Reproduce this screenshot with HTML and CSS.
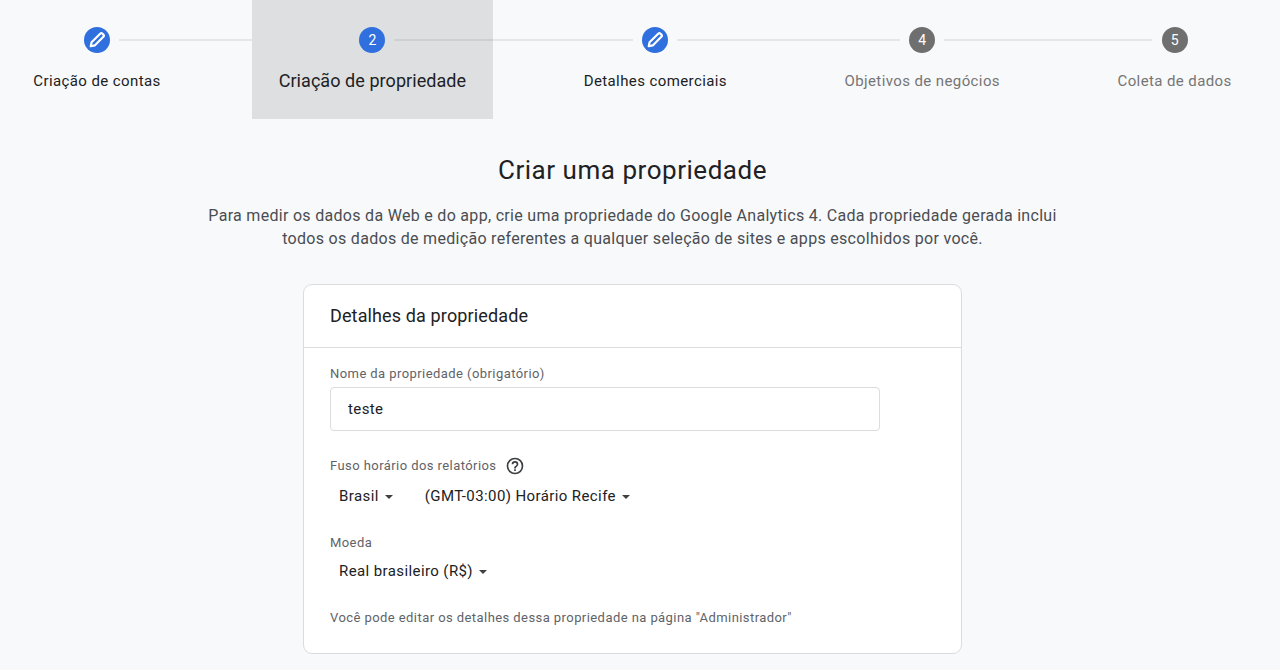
FILE: index.html
```html
<!DOCTYPE html>
<html lang="pt-BR">
<head>
  <meta charset="UTF-8" />
  <meta name="viewport" content="width=device-width, initial-scale=1.0"/>
  <title>Criar uma propriedade</title>
  <link rel="stylesheet" href="styles.css">
</head>
<body>

  <div class="page">
    <div class="stepper">
      <div class="step done line-1">
        <span class="dot">
          <svg viewBox="0 0 24 24" width="20" height="20"><path d="M4.5 19.5l1-4.8L15.8 4.4a2 2 0 0 1 2.8 0l1 1a2 2 0 0 1 0 2.8L9.300 18.500z"/></svg>
        </span>
        <span class="step-label">Criação de contas</span>
      </div>
      <div class="step current line-2">
        <span class="dot">2</span>
        <span class="step-label">Criação de propriedade</span>
      </div>
      <div class="step done line-3">
        <span class="dot">
          <svg viewBox="0 0 24 24" width="20" height="20"><path d="M4.5 19.5l1-4.8L15.8 4.4a2 2 0 0 1 2.8 0l1 1a2 2 0 0 1 0 2.8L9.300 18.500z"/></svg>
        </span>
        <span class="step-label">Detalhes comerciais</span>
      </div>
      <div class="step line-4">
        <span class="dot">4</span>
        <span class="step-label">Objetivos de negócios</span>
      </div>
      <div class="step">
        <span class="dot">5</span>
        <span class="step-label">Coleta de dados</span>
      </div>
    </div>

    <div class="intro">
      <h1>Criar uma propriedade</h1>
      <p>Para medir os dados da Web e do app, crie uma propriedade do Google Analytics 4. Cada propriedade gerada inclui<br/>todos os dados de medição referentes a qualquer seleção de sites e apps escolhidos por você.</p>
    </div>

    <div class="card">
      <div class="card-title">Detalhes da propriedade</div>
      <div class="card-body">
        <label class="field-label" for="propertyName">Nome da propriedade (obrigatório)</label>
        <input class="text-input" type="text" id="propertyName" value="teste" />

        <div class="field-label help-row">
          Fuso horário dos relatórios
          <svg viewBox="0 0 24 24" width="20" height="20"><path d="M11 18h2v-2h-2v2zm1-16a10 10 0 1 0 0 20 10 10 0 0 0 0-20zm0 18a8 8 0 1 1 0-16 8 8 0 0 1 0 16zm0-14a4 4 0 0 0-4 4h2a2 2 0 1 1 4 0c0 2-3 1.75-3 5h2c0-2.25 3-2.5 3-5a4 4 0 0 0-4-4z"/></svg>
        </div>
        <div class="select-row">
          <span class="select country">Brasil</span>
          <span class="select">(GMT-03:00) Horário Recife</span>
        </div>

        <div class="field-label currency-label">Moeda</div>
        <div class="select-row currency-row">
          <span class="select">Real brasileiro (R$)</span>
        </div>

        <p class="note">Você pode editar os detalhes dessa propriedade na página "Administrador"</p>
      </div>
    </div>
  </div>

</body>
</html>
```

FILE: styles.css
```css
html, body {
  height: 100%;
}
body {
  margin: 0;
  overflow: hidden;
  background: #f8f9fb;
  font-family: Roboto, 'Liberation Sans', sans-serif;
  color: #202124;
}
.page {
  width: 1265px;
}
.stepper {
  display: flex;
  justify-content: center;
  gap: 65.5px;
}
.step {
  position: relative;
  display: flex;
  flex-direction: column;
  align-items: center;
  height: 119px;
  padding: 0 26px;
  box-sizing: border-box;
  color: #757575;
}
.step.done, .step.current {
  color: #202124;
}
.step.current {
  background: #dedfe1;
  padding: 0 26.5px;
  margin-right: -0.5px;
}
.step::after {
  position: absolute;
  top: 39px;
  left: calc(50% + 22px);
  height: 2px;
  background: rgba(60, 64, 67, 0.1);
}
.line-1::after { content: ""; width: 231px; }
.line-2::after { content: ""; width: 239px; }
.line-3::after { content: ""; width: 223px; }
.line-4::after { content: ""; width: 208px; }
.dot {
  display: flex;
  align-items: center;
  justify-content: center;
  width: 26px;
  height: 26px;
  margin-top: 27px;
  border-radius: 50%;
  background: #6f6f6f;
  color: white;
  font-size: 14px;
}
.done .dot, .current .dot {
  background: #2f6fde;
}
.dot svg {
  fill: none;
  stroke: white;
  stroke-width: 2.6;
  stroke-linejoin: round;
}
.step-label {
  margin-top: 19px;
  font-size: 15px;
  line-height: 18px;
  letter-spacing: 0.4px;
  white-space: nowrap;
}
.current .step-label {
  font-size: 18px;
  letter-spacing: 0.06px;
}
.intro {
  text-align: center;
  margin-top: 34px;
}
h1 {
  margin: 0;
  font-size: 26px;
  line-height: 34px;
  font-weight: 400;
  letter-spacing: 0.53px;
}
.intro p {
  margin: 17px 0 0;
  font-size: 16px;
  line-height: 23px;
  letter-spacing: 0.3px;
  color: #4a4d51;
}
.card {
  width: 659px;
  box-sizing: border-box;
  margin: 34px auto 0;
  background: white;
  border: 1px solid #dadce0;
  border-radius: 9px;
}
.card-title {
  padding: 0 26px;
  height: 62px;
  line-height: 62px;
  font-size: 18px;
  letter-spacing: 0.13px;
  border-bottom: 1px solid #dadce0;
}
.card-body {
  padding: 18px 26px 27px;
}
.field-label {
  display: block;
  font-size: 13px;
  line-height: 16px;
  letter-spacing: 0.43px;
  color: #5f6368;
}
.text-input {
  display: block;
  width: 550px;
  height: 44px;
  box-sizing: border-box;
  margin-top: 5px;
  padding: 0 17px;
  border: 1px solid #dadce0;
  border-radius: 4px;
  font-family: inherit;
  font-size: 15px;
  letter-spacing: 0.4px;
  color: #202124;
}
.help-row {
  display: flex;
  align-items: center;
  gap: 8px;
  margin-top: 25px;
}
.help-row svg {
  fill: #3c4043;
}
.select-row {
  display: flex;
  gap: 32px;
  margin-top: 10px;
  padding-left: 9px;
}
.select {
  font-size: 15px;
  line-height: 20px;
  letter-spacing: 0.4px;
}
.select::after {
  content: "";
  display: inline-block;
  margin-left: 6px;
  vertical-align: middle;
  border-left: 4px solid transparent;
  border-right: 4px solid transparent;
  border-top: 4px solid #3c4043;
}
.currency-label {
  margin-top: 29px;
}
.note {
  margin: 29px 0 0;
  font-size: 13px;
  line-height: 16px;
  letter-spacing: 0.43px;
  color: #5f6368;
}
```
